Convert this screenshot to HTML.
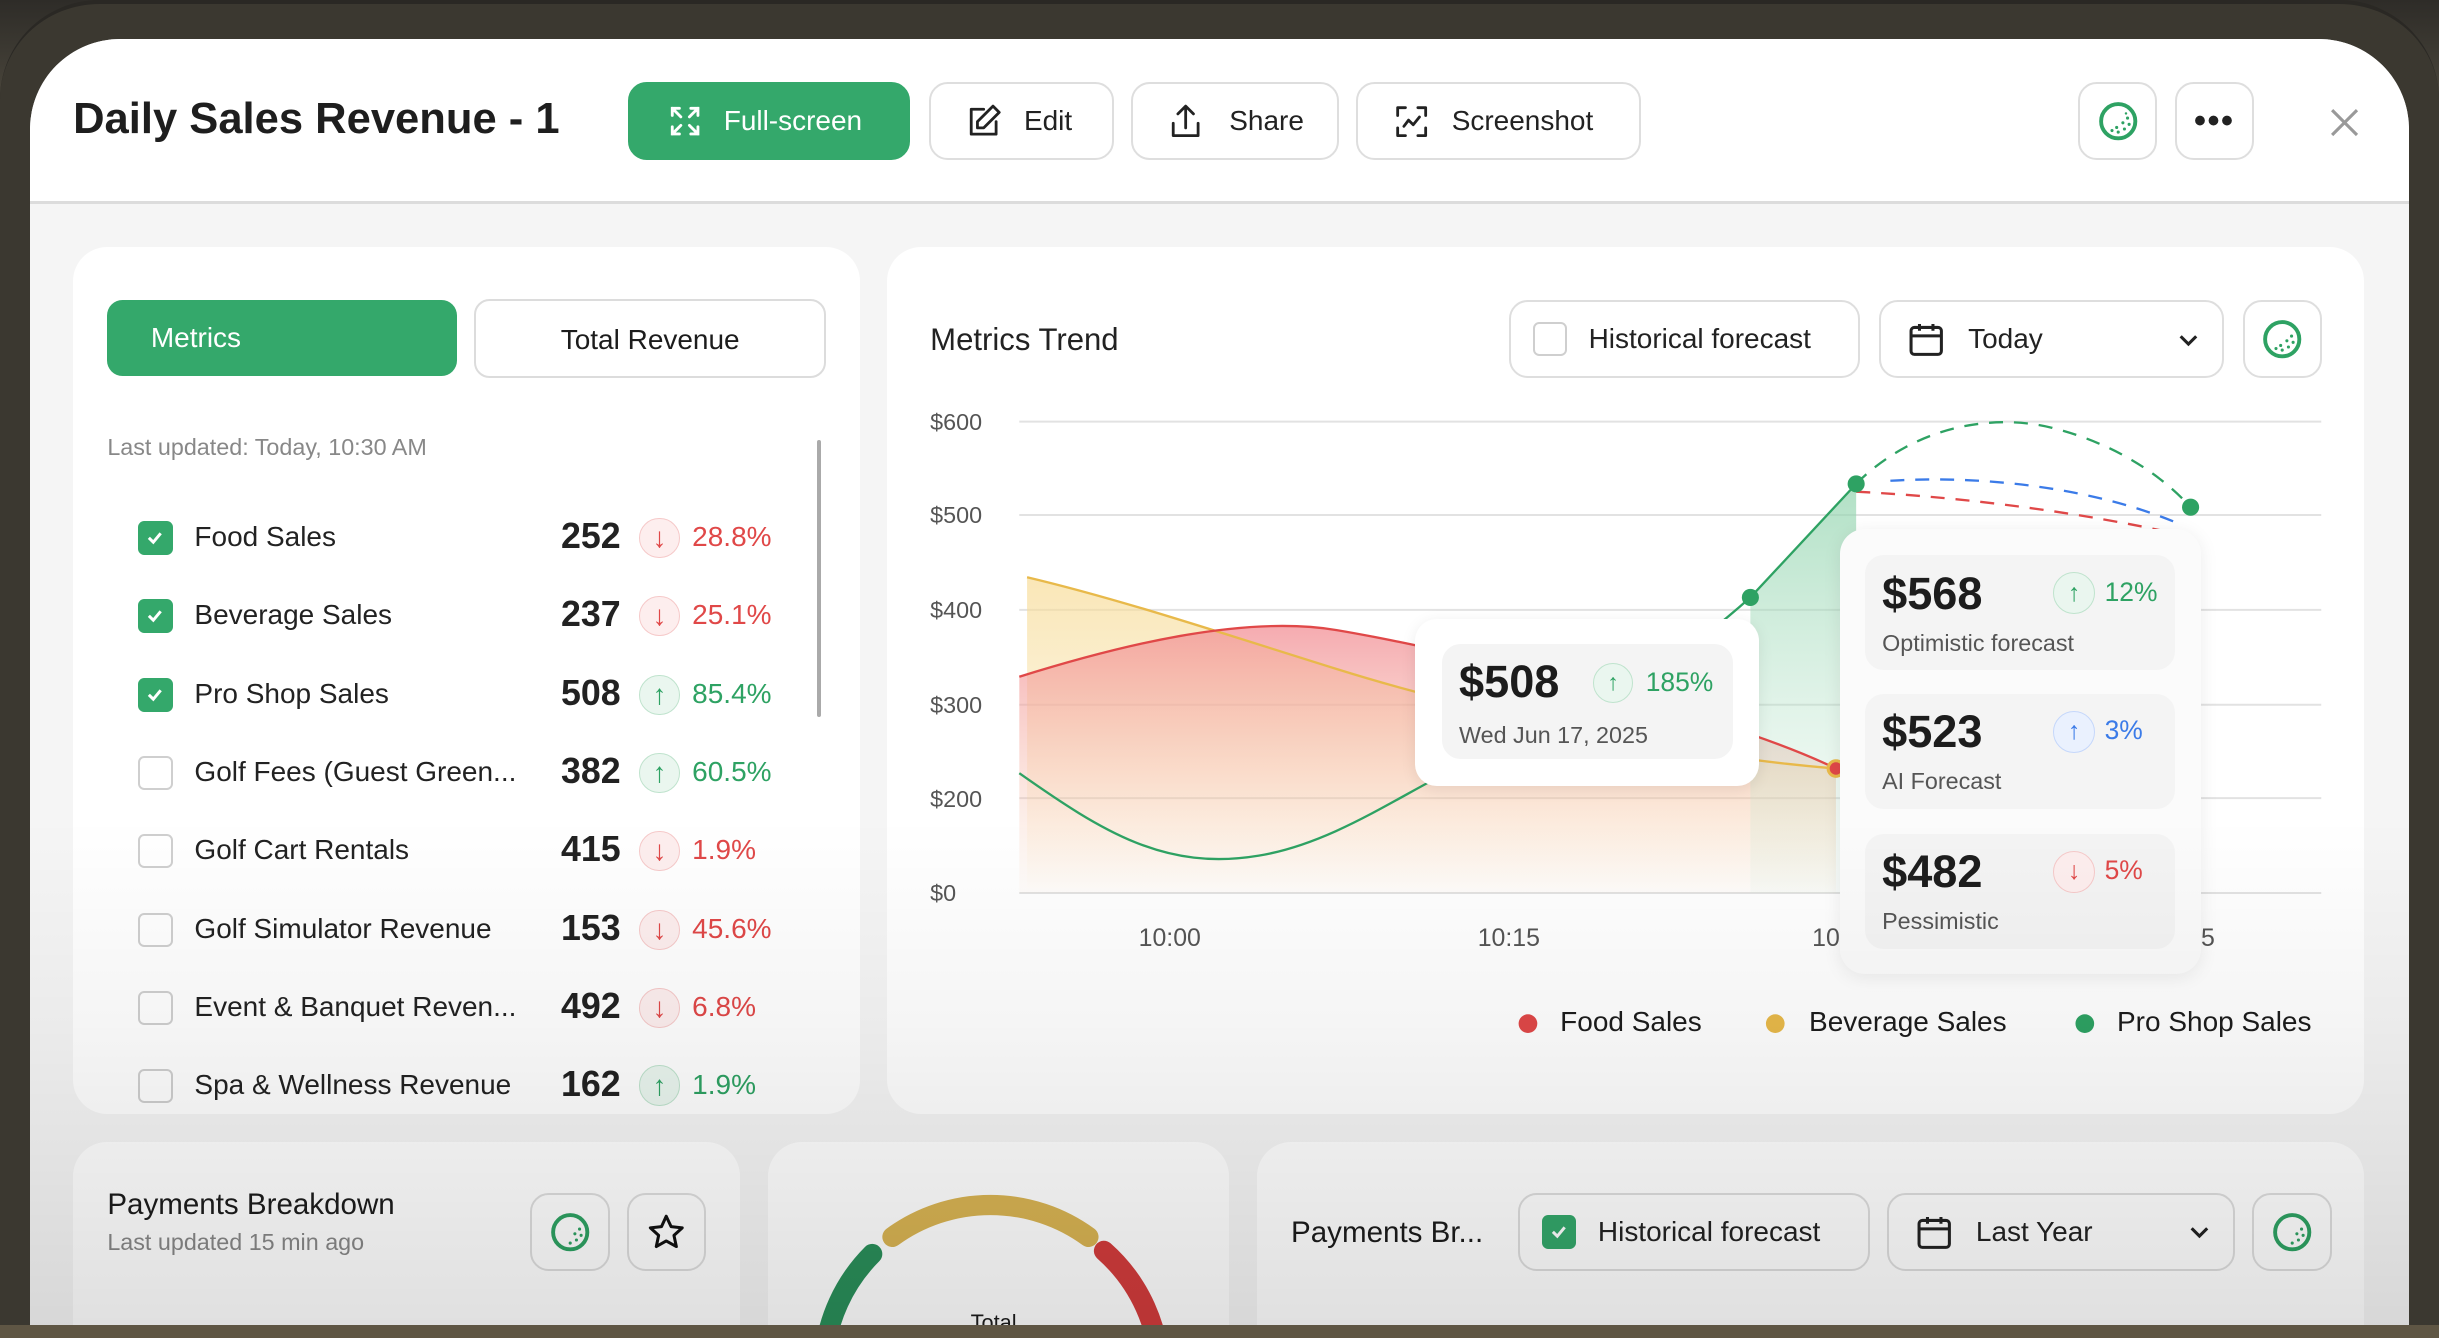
<!DOCTYPE html>
<html><head><meta charset="utf-8">
<style>
*{box-sizing:border-box;margin:0;padding:0}
html,body{width:2439px;height:1338px;overflow:hidden;background:#3d3a32}
#w{zoom:1.5555;width:1568px;height:860px;position:relative;font-family:"Liberation Sans",sans-serif;color:#1c1c1c;
background:linear-gradient(180deg,#2e2c28 0,#48443a 60px,#544c3e 500px,#5f5644 860px);overflow:hidden}
.shell{position:absolute;left:0;top:0;width:1568px;height:860px;border-radius:64px 64px 0 0;background:#3b3830;border-top:3px solid #2a2824}
.scr{position:absolute;left:19px;top:25px;width:1530px;height:827px;background:#f5f5f5;border-radius:58px 58px 0 0;overflow:hidden}
.hdr{position:absolute;left:0;top:0;width:1530px;height:106px;background:#fff;border-bottom:2px solid #dcdcdc}
.a{position:absolute}
.btn{position:absolute;height:50px;border:1.5px solid #dedede;border-radius:12px;background:#fff;display:flex;align-items:center;font-size:18px;color:#222}
.card{position:absolute;background:#fff;border-radius:22px}
.cb{position:absolute;width:22px;height:22px;border-radius:4px;border:1.5px solid #cfcfcf;background:#fff}
.cb.on{background:#34a86b;border-color:#34a86b}
.row{position:absolute;left:0;width:506px;height:30px;font-size:18px}
.row .lb{position:absolute;left:78px;top:4px;color:#222}
.row .v{position:absolute;right:154px;top:1px;font-size:23px;font-weight:bold;color:#222}
.row .bd{position:absolute;left:364px;top:2px;width:26px;height:26px;border-radius:50%;display:flex;align-items:center;justify-content:center}
.row .p{position:absolute;left:398px;top:4px}
.dn{background:#fdeeee;border:1px solid #f6c9c9;color:#e04848}
.up{background:#eaf6ef;border:1px solid #bfe3cd;color:#2ea263}
.bl{background:#eaf1fe;border:1px solid #c5d7fb;color:#3b7be8}
.ax{position:absolute;font-size:15px;color:#555}
.fc{position:absolute;left:16px;width:199px;height:74px;background:#f4f4f4;border-radius:12px}
.fc .n{position:absolute;left:11px;top:8px;font-size:29px;font-weight:bold;color:#1d1d1d}
.fc .s{position:absolute;left:11px;top:48px;font-size:15px;color:#555}
.fc .bd{position:absolute;left:121px;top:11px;width:27px;height:27px;border-radius:50%;display:flex;align-items:center;justify-content:center}
.fc .pc{position:absolute;left:154px;top:14px;font-size:17px}
</style></head><body>
<div id="w">
<div class="shell"></div>
<div class="scr">
 <div class="hdr">
  <div class="a" style="left:28px;top:36px;font-size:28px;font-weight:bold;color:#1e1e1e">Daily Sales Revenue - 1</div>
  <div class="btn" style="left:385px;top:28px;width:181px;background:#34a86b;border-color:#34a86b;color:#fff">
   <svg style="margin-left:24px" width="22" height="22" viewBox="0 0 24 24" fill="none" stroke="#fff" stroke-width="2" stroke-linecap="round"><path d="M3 8V3h5M3 3l6 6M21 8V3h-5M21 3l-6 6M3 16v5h5M3 21l6-6M21 16v5h-5M21 21l-6-6"/></svg>
   <span style="margin-left:14px">Full-screen</span></div>
  <div class="btn" style="left:578px;top:28px;width:119px">
   <svg style="margin-left:22px" width="24" height="24" viewBox="0 0 24 24" fill="none" stroke="#222" stroke-width="1.8" stroke-linecap="round" stroke-linejoin="round"><path d="M12 4H4v16h16v-8"/><path d="M18 2l4 4-10 10H8v-4z"/></svg>
   <span style="margin-left:14px">Edit</span></div>
  <div class="btn" style="left:708px;top:28px;width:134px">
   <svg style="margin-left:22px" width="24" height="24" viewBox="0 0 24 24" fill="none" stroke="#222" stroke-width="1.8" stroke-linecap="round" stroke-linejoin="round"><path d="M4 13v8h16v-8M12 16V2M7 7l5-5 5 5"/></svg>
   <span style="margin-left:16px">Share</span></div>
  <div class="btn" style="left:853px;top:28px;width:183px">
   <svg style="margin-left:22px" width="24" height="24" viewBox="0 0 24 24" fill="none" stroke="#222" stroke-width="1.8" stroke-linecap="round" stroke-linejoin="round"><path d="M3 8V3h5M16 3h5v5M3 16v5h5M21 16v5h-5M7 15l3-4 3 3 4-5"/></svg>
   <span style="margin-left:14px">Screenshot</span></div>
  <div class="btn" style="left:1317px;top:28px;width:51px;justify-content:center"><svg width="26" height="26" viewBox="0 0 26 26"><circle cx="13" cy="13" r="11" fill="#fff" stroke="#2ea263" stroke-width="2.5"/><g fill="#2ea263"><circle cx="19" cy="11" r="1"/><circle cx="20" cy="15" r="1"/><circle cx="17" cy="18" r="1"/><circle cx="13" cy="20" r="1"/><circle cx="9" cy="19" r="1"/><circle cx="16" cy="14" r="1"/><circle cx="12" cy="17" r="1"/><circle cx="18" cy="8" r=".8"/></g></svg></div>
  <div class="btn" style="left:1379px;top:28px;width:51px;justify-content:center;font-size:22px;font-weight:bold;letter-spacing:1px">•••</div>
  <svg class="a" style="left:1478px;top:44px" width="20" height="20" viewBox="0 0 20 20" stroke="#999" stroke-width="2"><path d="M2 2l16 16M18 2L2 18"/></svg>
 </div>

 <!-- left card -->
 <div class="card" style="left:28px;top:134px;width:506px;height:557px;overflow:hidden">
  <div class="a" style="left:22px;top:34px;width:225px;height:49px;background:#34a86b;border-radius:10px;color:#fff;font-size:18px;padding:14px 0 0 28px">Metrics</div>
  <div class="a" style="left:258px;top:33px;width:226px;height:51px;border:1.5px solid #dcdcdc;border-radius:10px;font-size:18px;text-align:center;padding-top:15px">Total Revenue</div>
  <div class="a" style="left:22px;top:120px;font-size:15px;color:#888">Last updated: Today, 10:30 AM</div>
  <div class="a" style="left:478px;top:124px;width:3px;height:178px;background:#aaa;border-radius:2px"></div>
  <div class="row" style="top:172px"><div class="cb on" style="left:42px;top:4px"><svg width="19" height="19" viewBox="0 0 20 20"><path d="M6 10l3 3 5-6" fill="none" stroke="#fff" stroke-width="2"/></svg></div><span class="lb">Food Sales</span><span class="v">252</span><span class="bd dn">↓</span><span class="p" style="color:#e04848">28.8%</span></div>
  <div class="row" style="top:222px"><div class="cb on" style="left:42px;top:4px"><svg width="19" height="19" viewBox="0 0 20 20"><path d="M6 10l3 3 5-6" fill="none" stroke="#fff" stroke-width="2"/></svg></div><span class="lb">Beverage Sales</span><span class="v">237</span><span class="bd dn">↓</span><span class="p" style="color:#e04848">25.1%</span></div>
  <div class="row" style="top:273px"><div class="cb on" style="left:42px;top:4px"><svg width="19" height="19" viewBox="0 0 20 20"><path d="M6 10l3 3 5-6" fill="none" stroke="#fff" stroke-width="2"/></svg></div><span class="lb">Pro Shop Sales</span><span class="v">508</span><span class="bd up">↑</span><span class="p" style="color:#2ea263">85.4%</span></div>
  <div class="row" style="top:323px"><div class="cb" style="left:42px;top:4px"></div><span class="lb">Golf Fees (Guest Green...</span><span class="v">382</span><span class="bd up">↑</span><span class="p" style="color:#2ea263">60.5%</span></div>
  <div class="row" style="top:373px"><div class="cb" style="left:42px;top:4px"></div><span class="lb">Golf Cart Rentals</span><span class="v">415</span><span class="bd dn">↓</span><span class="p" style="color:#e04848">1.9%</span></div>
  <div class="row" style="top:424px"><div class="cb" style="left:42px;top:4px"></div><span class="lb">Golf Simulator Revenue</span><span class="v">153</span><span class="bd dn">↓</span><span class="p" style="color:#e04848">45.6%</span></div>
  <div class="row" style="top:474px"><div class="cb" style="left:42px;top:4px"></div><span class="lb">Event &amp; Banquet Reven...</span><span class="v">492</span><span class="bd dn">↓</span><span class="p" style="color:#e04848">6.8%</span></div>
  <div class="row" style="top:524px"><div class="cb" style="left:42px;top:4px"></div><span class="lb">Spa &amp; Wellness Revenue</span><span class="v">162</span><span class="bd up">↑</span><span class="p" style="color:#2ea263">1.9%</span></div>
 </div>

 <!-- right card -->
 <div class="card" style="left:551px;top:134px;width:950px;height:557px">
  <div class="a" style="left:28px;top:48px;font-size:20px;color:#222">Metrics Trend</div>
  <div class="btn" style="left:400px;top:34px;width:226px"><div class="cb" style="position:static;margin-left:14px"></div><span style="margin-left:14px">Historical forecast</span></div>
  <div class="btn" style="left:638px;top:34px;width:222px"><svg style="margin-left:16px" width="26" height="26" viewBox="0 0 24 24" fill="none" stroke="#222" stroke-width="1.8"><rect x="3" y="5" width="18" height="16" rx="2"/><path d="M3 10h18M8 3v4M16 3v4"/></svg><span style="margin-left:14px">Today</span><svg style="position:absolute;right:14px" width="16" height="16" viewBox="0 0 16 16" fill="none" stroke="#222" stroke-width="2"><path d="M3 6l5 5 5-5"/></svg></div>
  <div class="btn" style="left:872px;top:34px;width:51px;justify-content:center"><svg width="26" height="26" viewBox="0 0 26 26"><circle cx="13" cy="13" r="11" fill="#fff" stroke="#2ea263" stroke-width="2.5"/><g fill="#2ea263"><circle cx="19" cy="11" r="1"/><circle cx="20" cy="15" r="1"/><circle cx="17" cy="18" r="1"/><circle cx="13" cy="20" r="1"/><circle cx="9" cy="19" r="1"/><circle cx="16" cy="14" r="1"/><circle cx="12" cy="17" r="1"/></g></svg></div>
 </div>
 <div class="ax" style="left:579px;top:238px">$600</div>
 <div class="ax" style="left:579px;top:298px">$500</div>
 <div class="ax" style="left:579px;top:359px">$400</div>
 <div class="ax" style="left:579px;top:420px">$300</div>
 <div class="ax" style="left:579px;top:480px">$200</div>
 <div class="ax" style="left:579px;top:541px">$0</div>
 <div class="ax" style="left:713px;top:569px;font-size:16px">10:00</div>
 <div class="ax" style="left:931px;top:569px;font-size:16px">10:15</div>
 <div class="ax" style="left:1146px;top:569px;font-size:16px">10</div>
 <div class="ax" style="left:1396px;top:569px;font-size:16px">5</div>
 <svg class="a" style="left:0;top:0" width="1530" height="700">
  <defs>
   <linearGradient id="gr" x1="0" y1="0" x2="0" y2="1"><stop offset="0" stop-color="#f28f96" stop-opacity=".75"/><stop offset="1" stop-color="#f6c9a8" stop-opacity=".05"/></linearGradient>
   <linearGradient id="gy" x1="0" y1="0" x2="0" y2="1"><stop offset="0" stop-color="#f7dc98" stop-opacity=".7"/><stop offset="1" stop-color="#f7dc98" stop-opacity="0"/></linearGradient>
   <linearGradient id="gg" x1="0" y1="0" x2="0" y2="1"><stop offset="0" stop-color="#8fd3ac" stop-opacity=".7"/><stop offset="1" stop-color="#c8ead6" stop-opacity=".1"/></linearGradient>
  </defs>
  <g stroke="#e2e2e2" stroke-width="1.3"><path d="M636 246H1473M636 306H1473M636 367H1473M636 428H1473M636 488H1473M636 549H1473"/></g>
  <path d="M641 346 C700 360 760 380 840 405 S1050 460 1161 469 L1161 549 L641 549Z" fill="url(#gy)"/>
  <path d="M636 410 C700 390 780 370 840 380 S1080 430 1161 469 L1161 549 L636 549Z" fill="url(#gr)"/>
  <path d="M1106 359 L1174 286 L1174 549 L1106 549Z" fill="url(#gg)"/>
  <path d="M641 346 C700 360 760 380 840 405 S1050 460 1161 469" fill="none" stroke="#e8b94a" stroke-width="1.5"/>
  <path d="M636 410 C700 390 780 370 840 380 S1080 430 1161 469" fill="none" stroke="#e04848" stroke-width="1.5"/>
  <path d="M636 472 C690 510 730 535 790 525 S900 470 950 455 S1060 400 1106 359 L1174 286" fill="none" stroke="#2ea263" stroke-width="1.5"/>
  <path d="M1174 286 C1210 250 1260 240 1300 250 S1370 280 1389 301" fill="none" stroke="#2ea263" stroke-width="1.5" stroke-dasharray="9 7"/>
  <path d="M1174 291 C1250 295 1320 305 1380 318" fill="none" stroke="#e04848" stroke-width="1.5" stroke-dasharray="9 7"/>
  <path d="M1196 284 C1260 280 1330 290 1380 311" fill="none" stroke="#3b7be8" stroke-width="1.5" stroke-dasharray="9 7"/>
  <circle cx="1106" cy="359" r="5.5" fill="#2ea263"/><circle cx="1174" cy="286" r="5.5" fill="#2ea263"/><circle cx="1389" cy="301" r="5.5" fill="#2ea263"/>
  <circle cx="1161" cy="469" r="5" fill="#e04848" stroke="#e8b94a" stroke-width="2"/>
  <circle cx="963" cy="633" r="6" fill="#e04848"/><circle cx="1122" cy="633" r="6" fill="#e8b94a"/><circle cx="1321" cy="633" r="6" fill="#2ea263"/>
 </svg>
 <div class="a" style="left:984px;top:622px;font-size:18px">Food Sales</div>
 <div class="a" style="left:1144px;top:622px;font-size:18px">Beverage Sales</div>
 <div class="a" style="left:1342px;top:622px;font-size:18px">Pro Shop Sales</div>

 <!-- tooltip -->
 <div class="a" style="left:891px;top:373px;width:221px;height:107px;background:#fff;border-radius:14px;box-shadow:0 2px 10px rgba(0,0,0,.08)">
  <div class="a" style="left:17px;top:16px;width:187px;height:74px;background:#f4f4f4;border-radius:12px">
   <div class="a" style="left:11px;top:8px;font-size:29px;font-weight:bold">$508</div>
   <div class="a up" style="left:97px;top:12px;width:26px;height:26px;border-radius:50%;display:flex;align-items:center;justify-content:center;font-size:15px">↑</div>
   <div class="a" style="left:131px;top:15px;font-size:17px;color:#2ea263">185%</div>
   <div class="a" style="left:11px;top:50px;font-size:15px;color:#555">Wed Jun 17, 2025</div>
  </div>
 </div>
 <!-- forecast popup -->
 <div class="a" style="left:1164px;top:315px;width:232px;height:286px;background:#fbfbfb;border-radius:16px;box-shadow:0 2px 12px rgba(0,0,0,.08)">
  <div class="fc" style="top:17px"><span class="n">$568</span><span class="bd up">↑</span><span class="pc" style="color:#2ea263">12%</span><span class="s">Optimistic forecast</span></div>
  <div class="fc" style="top:106px"><span class="n">$523</span><span class="bd bl">↑</span><span class="pc" style="color:#3b7be8">3%</span><span class="s">AI Forecast</span></div>
  <div class="fc" style="top:196px"><span class="n">$482</span><span class="bd dn">↓</span><span class="pc" style="color:#e04848">5%</span><span class="s">Pessimistic</span></div>
 </div>

 <!-- bottom cards -->
 <div class="card" style="left:28px;top:709px;width:429px;height:118px;border-radius:22px 22px 0 0">
  <div class="a" style="left:22px;top:30px;font-size:19px">Payments Breakdown</div>
  <div class="a" style="left:22px;top:56px;font-size:15px;color:#888">Last updated 15 min ago</div>
  <div class="btn" style="left:294px;top:33px;width:51px;justify-content:center"><svg width="26" height="26" viewBox="0 0 26 26"><circle cx="13" cy="13" r="11" fill="#fff" stroke="#2ea263" stroke-width="2.5"/><g fill="#2ea263"><circle cx="19" cy="11" r="1"/><circle cx="20" cy="15" r="1"/><circle cx="17" cy="18" r="1"/><circle cx="13" cy="20" r="1"/><circle cx="16" cy="14" r="1"/></g></svg></div>
  <div class="btn" style="left:356px;top:33px;width:51px;justify-content:center"><svg width="26" height="26" viewBox="0 0 24 24" fill="none" stroke="#111" stroke-width="1.8" stroke-linejoin="round"><path d="M12 2.5l2.9 6.2 6.6.7-4.9 4.5 1.4 6.6L12 17.2l-5.9 3.3 1.4-6.6-4.9-4.5 6.6-.7z"/></svg></div>
 </div>
 <div class="card" style="left:475px;top:709px;width:296px;height:118px;overflow:hidden;border-radius:22px 22px 0 0">
  <svg class="a" style="left:0;top:0" width="296" height="200"><g fill="none" stroke-width="13" stroke-linecap="round">
   <path d="M67 72 A107 107 0 0 0 36 140" stroke="#2a8f5a"/>
   <path d="M80 61 A107 107 0 0 1 206 61" stroke="#d9b453"/>
   <path d="M216 70 A107 107 0 0 1 252 150" stroke="#d33c3c"/>
  </g></svg>
  <div class="a" style="left:130px;top:108px;font-size:14px">Total</div>
 </div>
 <div class="card" style="left:789px;top:709px;width:712px;height:118px;border-radius:22px 22px 0 0">
  <div class="a" style="left:22px;top:48px;font-size:19px">Payments Br...</div>
  <div class="btn" style="left:168px;top:33px;width:226px"><div class="cb on" style="position:static;margin-left:14px"><svg width="19" height="19" viewBox="0 0 20 20"><path d="M6 10l3 3 5-6" fill="none" stroke="#fff" stroke-width="2"/></svg></div><span style="margin-left:14px">Historical forecast</span></div>
  <div class="btn" style="left:405px;top:33px;width:224px"><svg style="margin-left:16px" width="26" height="26" viewBox="0 0 24 24" fill="none" stroke="#222" stroke-width="1.8"><rect x="3" y="5" width="18" height="16" rx="2"/><path d="M3 10h18M8 3v4M16 3v4"/></svg><span style="margin-left:14px">Last Year</span><svg style="position:absolute;right:14px" width="16" height="16" viewBox="0 0 16 16" fill="none" stroke="#222" stroke-width="2"><path d="M3 6l5 5 5-5"/></svg></div>
  <div class="btn" style="left:640px;top:33px;width:51px;justify-content:center"><svg width="26" height="26" viewBox="0 0 26 26"><circle cx="13" cy="13" r="11" fill="#fff" stroke="#2ea263" stroke-width="2.5"/><g fill="#2ea263"><circle cx="19" cy="11" r="1"/><circle cx="20" cy="15" r="1"/><circle cx="17" cy="18" r="1"/><circle cx="13" cy="20" r="1"/><circle cx="16" cy="14" r="1"/></g></svg></div>
 </div>
 <!-- bottom dim fade -->
 <div class="a" style="left:0;top:500px;width:1530px;height:327px;background:linear-gradient(180deg,rgba(0,0,0,0) 0,rgba(0,0,0,.04) 40%,rgba(0,0,0,.12) 100%);pointer-events:none"></div>
</div>
<div class="a" style="left:0;top:852px;width:1568px;height:8px;background:#5f5644"></div>
</div>
</body></html>
